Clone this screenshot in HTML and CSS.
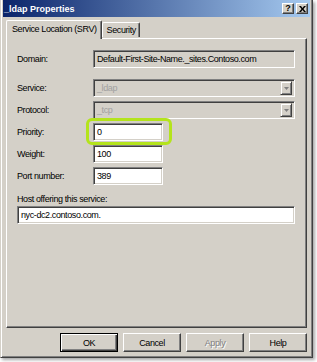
FILE: index.html
```html
<html>
  <head>
    <title>_ldap Properties</title>
    <link rel="stylesheet" href="styles.css">
  </head>
  <body>
    <div class="window">
      <div class="titlebar">
        <span class="title">_ldap Properties</span>
        <div class="caption-buttons">
          <span class="cap-btn">?</span>
          <span class="cap-btn">
            <svg width="7" height="6" viewBox="0 0 7 6"><path d="M0 0h2l1.5 2 1.5-2h2l-2.5 3 2.5 3h-2l-1.5-2-1.5 2h-2l2.5-3z" fill="#000"/></svg>
          </span>
        </div>
      </div>

      <div class="tabs">
        <span class="tab active">Service Location (SRV)</span>
        <span class="tab">Security</span>
      </div>

      <div class="panel">
        <div class="row first">
          <span class="label">Domain:</span>
          <div class="field wide readonly">Default-First-Site-Name._sites.Contoso.com</div>
        </div>

        <div class="row gap">
          <span class="label">Service:</span>
          <div class="field wide combo disabled">
            <span class="combo-text">_ldap</span>
            <span class="drop"><svg width="5" height="3" viewBox="0 0 5 3"><path d="M0 0h5l-2.5 3z" fill="#808080"/></svg></span>
          </div>
        </div>

        <div class="row">
          <span class="label">Protocol:</span>
          <div class="field wide combo disabled">
            <span class="combo-text">_tcp</span>
            <span class="drop"><svg width="5" height="3" viewBox="0 0 5 3"><path d="M0 0h5l-2.5 3z" fill="#808080"/></svg></span>
          </div>
        </div>

        <div class="row">
          <span class="label">Priority:</span>
          <div class="highlight">
            <div class="field short">0</div>
          </div>
        </div>

        <div class="row">
          <span class="label">Weight:</span>
          <div class="field short">100</div>
        </div>

        <div class="row">
          <span class="label">Port number:</span>
          <div class="field short">389</div>
        </div>

        <div class="host-label">Host offering this service:</div>
        <div class="field full">nyc-dc2.contoso.com.</div>
      </div>

      <div class="buttons">
        <span class="button default">OK</span>
        <span class="button">Cancel</span>
        <span class="button disabled">Apply</span>
        <span class="button">Help</span>
      </div>
    </div>
  </body>
</html>
```

FILE: styles.css
```css
body {
    margin: 0;
    background: #fff;
    font-family: "Liberation Sans", Arial, sans-serif;
    font-size: 9px;
    letter-spacing: -0.4px;
    color: #000;
}
.window {
    width: 313px;
    height: 358px;
    box-sizing: border-box;
    background: #d4d0c8;
    border: 1px solid;
    border-top: none;
    border-color: #d4d0c8 #404040 #404040 #d4d0c8;
    box-shadow: inset 1px 0 #fff, inset -1px -1px #808080, 2px 2px 3px rgba(0, 0, 0, 0.35);
    padding: 0 2px 2px 2px;
}
.titlebar {
    height: 17px;
    display: flex;
    align-items: center;
    justify-content: space-between;
    background: linear-gradient(to right, #0a246a, #a6caf0);
    padding: 0 2px 0 1px;
}
.title {
    color: #fff;
    font-weight: bold;
    letter-spacing: 0;
}
.caption-buttons {
    display: flex;
    gap: 2px;
}
.cap-btn {
    width: 12px;
    height: 11px;
    box-sizing: border-box;
    background: #d4d0c8;
    border: 1px solid;
    border-color: #fff #404040 #404040 #fff;
    box-shadow: inset -1px -1px #808080;
    display: flex;
    align-items: center;
    justify-content: center;
    font-weight: bold;
    font-size: 9px;
    letter-spacing: 0;
    line-height: 9px;
}
.tabs {
    display: flex;
    align-items: flex-end;
    height: 18px;
    margin-top: 3px;
    padding-left: 3px;
    position: relative;
    z-index: 1;
}
.tab {
    height: 15px;
    box-sizing: border-box;
    padding: 1px 3px 0 4px;
    border: 1px solid;
    border-bottom: none;
    border-color: #fff #404040 #404040 #fff;
    box-shadow: inset -1px 0 #808080;
    border-radius: 2px 2px 0 0;
    line-height: 13px;
    margin-bottom: 1px;
}
.tab.active {
    height: 19px;
    padding: 2px 4px 0 5px;
    margin-bottom: -1px;
    background: #d4d0c8;
}
.panel {
    height: 290px;
    box-sizing: border-box;
    margin: 0 3px;
    border: 1px solid;
    border-color: #fff #404040 #404040 #fff;
    box-shadow: inset -1px -1px #808080;
    padding: 11px 10px 0 10px;
}
.row {
    display: flex;
    align-items: center;
    margin-top: 4px;
}
.row.first {
    margin-top: 0;
}
.row.gap {
    margin-top: 11px;
}
.label {
    width: 76px;
    flex: none;
}
.field {
    height: 18px;
    box-sizing: border-box;
    background: #fff;
    border: 1px solid;
    border-color: #808080 #fff #fff #808080;
    box-shadow: inset 1px 1px #404040, inset -1px -1px #d4d0c8;
    padding: 0 3px;
    line-height: 16px;
    white-space: nowrap;
}
.wide {
    width: 202px;
}
.short {
    width: 70px;
}
.full {
    width: 278px;
    margin-top: 1px;
}
.readonly, .disabled {
    background: #d4d0c8;
}
.combo {
    display: flex;
    align-items: center;
    justify-content: space-between;
    padding: 2px 2px 2px 3px;
}
.combo-text {
    color: #a0a0a0;
}
.drop {
    width: 12px;
    height: 14px;
    box-sizing: border-box;
    border: 1px solid;
    border-color: #d4d0c8 #404040 #404040 #d4d0c8;
    box-shadow: inset 1px 1px #fff, inset -1px -1px #808080;
    display: flex;
    align-items: center;
    justify-content: center;
}
.highlight {
    position: relative;
}
.highlight::after {
    content: "";
    position: absolute;
    top: -5px;
    left: -7px;
    right: -9px;
    bottom: -4px;
    border: 3px solid #b4e41c;
    border-radius: 6px;
}
.host-label {
    margin-top: 8px;
    line-height: 12px;
}
.buttons {
    display: flex;
    justify-content: flex-end;
    gap: 5px;
    margin-top: 5px;
    padding-right: 3px;
}
.button {
    width: 58px;
    height: 19px;
    box-sizing: border-box;
    border: 1px solid;
    border-color: #fff #404040 #404040 #fff;
    box-shadow: inset -1px -1px #808080;
    display: flex;
    align-items: center;
    justify-content: center;
}
.button.default {
    border-color: #000;
    box-shadow: inset 1px 1px #fff, inset -1px -1px #404040, inset -2px -2px #808080;
}
.button.disabled {
    color: #808080;
    text-shadow: 1px 1px #fff;
}
```
